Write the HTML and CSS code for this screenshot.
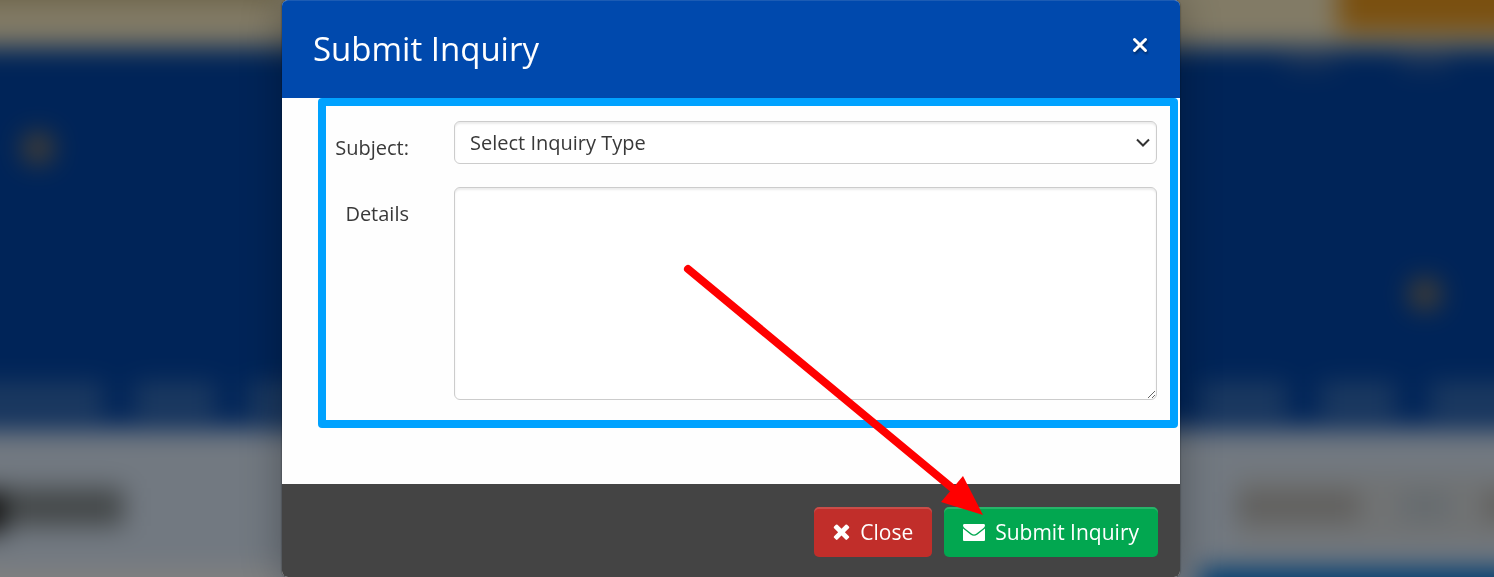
FILE: index.html
```
<!DOCTYPE html>
<html lang="en">
<head>
<meta charset="utf-8">
<meta name="viewport" content="width=device-width, initial-scale=1">
<title>Submit Inquiry</title>
<link rel="stylesheet" href="styles.css">
</head>
<body>
<svg class="backdrop" viewBox="0 0 1494 577" preserveAspectRatio="none" aria-hidden="true">
  <defs>
    <filter id="soft" filterUnits="userSpaceOnUse" x="-60" y="-60" width="1614" height="697" color-interpolation-filters="sRGB"><feGaussianBlur stdDeviation="13"/></filter>
  </defs>
  <rect width="1494" height="577" fill="#002458"/>
  <g filter="url(#soft)">
    <rect x="-60" y="-60" width="1614" height="107" fill="#827b66"/>
    <rect x="-60" y="-60" width="342" height="62" fill="#6b6247"/>
    <rect x="1338" y="-60" width="220" height="92" fill="#7a5010"/>
    <rect x="-60" y="47" width="1614" height="382" fill="#002458"/>
    <g fill="#1c3458">
      <rect x="1285" y="54" width="50" height="14"/>
      <rect x="1400" y="54" width="50" height="14"/>
    </g>
    <g fill="#1d3a60">
      <rect x="-60" y="383" width="164" height="34"/>
      <rect x="134" y="383" width="82" height="34"/>
      <rect x="247" y="383" width="60" height="34"/>
      <rect x="1200" y="383" width="87" height="34"/>
      <rect x="1320" y="383" width="76" height="34"/>
      <rect x="1430" y="383" width="120" height="34"/>
    </g>
    <circle cx="38" cy="148" r="16" fill="#4a4030"/>
    <circle cx="1425" cy="294" r="16" fill="#4a4030"/>
    <rect x="-60" y="429" width="1614" height="220" fill="#727981"/>
    <rect x="-60" y="568" width="342" height="70" fill="#808080"/>
    <rect x="-60" y="488" width="184" height="38" fill="#444849"/>
    <rect x="-60" y="492" width="64" height="42" fill="#111"/>
    <rect x="1235" y="474" width="320" height="70" fill="#717374"/>
    <rect x="1237" y="492" width="122" height="28" fill="#5f5e5c"/>
    <rect x="1400" y="492" width="50" height="28" fill="#656b6f"/>
    <rect x="1484" y="492" width="60" height="28" fill="#5f5e5c"/>
    <rect x="1200" y="568" width="350" height="80" fill="#003c70"/>
  </g>
</svg>

<main class="stage">
  <form class="modal" role="dialog" aria-labelledby="title">
    <header class="modal-header">
      <h1 class="modal-title" id="title">Submit Inquiry</h1>
      <button class="dismiss" type="button" aria-label="Dismiss">
        <svg viewBox="0 0 16 16" width="16" height="16"><path d="M2.500 2.500l11 11M13.500 2.500l-11 11"/></svg>
      </button>
    </header>

    <div class="modal-body">
      <div class="highlight">
        <label class="label" for="subject">Subject:</label>
        <div class="select-wrap">
          <select class="field select" id="subject"><option>Select Inquiry Type</option></select>
          <svg class="chevron" viewBox="0 0 14 10" width="14" height="10" aria-hidden="true"><path d="M1 1.5l6 6 6-6"/></svg>
        </div>
        <label class="label" for="details">Details</label>
        <textarea class="field textarea" id="details"></textarea>
      </div>
    </div>

    <footer class="modal-footer">
      <button class="btn btn-close" type="button">
        <svg viewBox="0 0 17 16" width="17" height="16" aria-hidden="true"><path d="M4.500 .8L8.500 4.800l4-4q.8-.6 1.600 0l1.800 1.800q.7.800 0 1.600l-4 4 4 4q.7.800 0 1.600l-1.800 1.800q-.8.600-1.600 0l-4-4-4 4q-.8.600-1.600 0L1.100 13.800q-.7-.8 0-1.600l4-4-4-4q-.7-.8 0-1.600L2.900.8q.8-.6 1.600 0z"/></svg>
        Close
      </button>
      <button class="btn btn-submit" type="submit">
        <svg viewBox="0 0 22 17" width="22" height="17" aria-hidden="true"><path d="M1 0h20q1 0 1 1.500q0 1.500-2 3l-6.500 5q-2.500 1.800-5 0L2 4.500Q0 3 0 1.500Q0 0 1 0z"/><path d="M0 4.500l7.500 6q3.500 2.600 7 0l7.500-6V16q0 1-1 1H1q-1 0-1-1z"/></svg>
        Submit Inquiry
      </button>
    </footer>

    <svg class="arrow" viewBox="0 0 300 252" width="300" height="252" aria-hidden="true">
      <path class="arrow-line" d="M5 5L274 228"/>
      <path d="M300 251L258 238L280 212z"/>
    </svg>
  </form>
</main>
</body>
</html>
```
FILE: styles.css
```
* { box-sizing: border-box; }

body {
  margin: 0;
  min-height: 100vh;
  overflow: hidden;
  background: #002458;
  color: #393939;
  font: 20px/28px "Open Sans", "Noto Sans", sans-serif;
}

.backdrop {
  position: fixed;
  inset: 0;
  width: 100%;
  height: 100%;
}

.stage {
  position: relative;
  display: flex;
  justify-content: center;
  padding-right: 32px;
}

.modal {
  position: relative;
  width: 100%;
  max-width: 898px;
  border-radius: 6px;
  background: #fefefe;
  box-shadow: 0 0 40px rgba(0, 0, 0, 0.3), 0 0 2px rgba(0, 0, 0, 0.6);
}

.modal-header {
  display: flex;
  align-items: flex-start;
  justify-content: space-between;
  padding: 24px 32px 25px 31px;
  border-top: 1px solid #1c5cb4;
  border-radius: 6px 6px 0 0;
  background: #0049ad;
  color: #fff;
}

.modal-title {
  margin: 0;
  font-size: 33px;
  font-weight: 400;
  line-height: 48px;
}

.dismiss {
  display: flex;
  margin-top: 12px;
  padding: 0;
  border: 0;
  background: none;
  cursor: pointer;
}

.dismiss path {
  fill: none;
  stroke: #fff;
  stroke-width: 3;
  stroke-linecap: round;
}

.dismiss svg { filter: drop-shadow(1px 2px 1px rgba(0, 0, 0, 0.4)); }

.modal-body { padding: 0 2px 56px 36px; }

.highlight {
  display: grid;
  grid-template-columns: 83px 1fr;
  gap: 23px 45px;
  padding: 15px 13px 20px 0;
  border: 8px solid #00a2ff;
  border-radius: 4px;
}

.label {
  padding-top: 13px;
  text-align: right;
}

.field {
  display: block;
  width: 100%;
  border: 1px solid #ccc;
  border-radius: 6px;
  background: #fff;
  box-shadow: inset 0 2px 2px rgba(0, 0, 0, 0.08);
  color: #393939;
  font: inherit;
}

.select-wrap { position: relative; }

.select {
  height: 43px;
  padding: 0 40px 0 15px;
  appearance: none;
}

.chevron {
  position: absolute;
  top: 17px;
  right: 7px;
  fill: none;
  stroke: #333;
  stroke-width: 2;
  pointer-events: none;
}

.textarea {
  height: 213px;
  padding: 8px 15px;
  resize: vertical;
}

.modal-footer {
  display: flex;
  justify-content: flex-end;
  gap: 12px;
  padding: 23px 22px 20px;
  border-radius: 0 0 6px 6px;
  background: #444;
}

.btn {
  display: flex;
  align-items: center;
  gap: 10px;
  height: 50px;
  padding: 0 19px;
  border: 0;
  border-radius: 5px;
  color: #fff;
  font: 21px/30px "Open Sans", "Noto Sans", sans-serif;
  box-shadow: inset 0 2px 0 rgba(255, 255, 255, 0.15);
  cursor: pointer;
}

.btn svg { fill: #fff; }

.btn-close { background: #c12e2a; }

.btn-submit { background: #02a750; }

.arrow {
  position: absolute;
  right: 197px;
  bottom: 61px;
  fill: #f00;
  pointer-events: none;
}

.arrow-line {
  fill: none;
  stroke: #f00;
  stroke-width: 8;
  stroke-linecap: round;
}
```
